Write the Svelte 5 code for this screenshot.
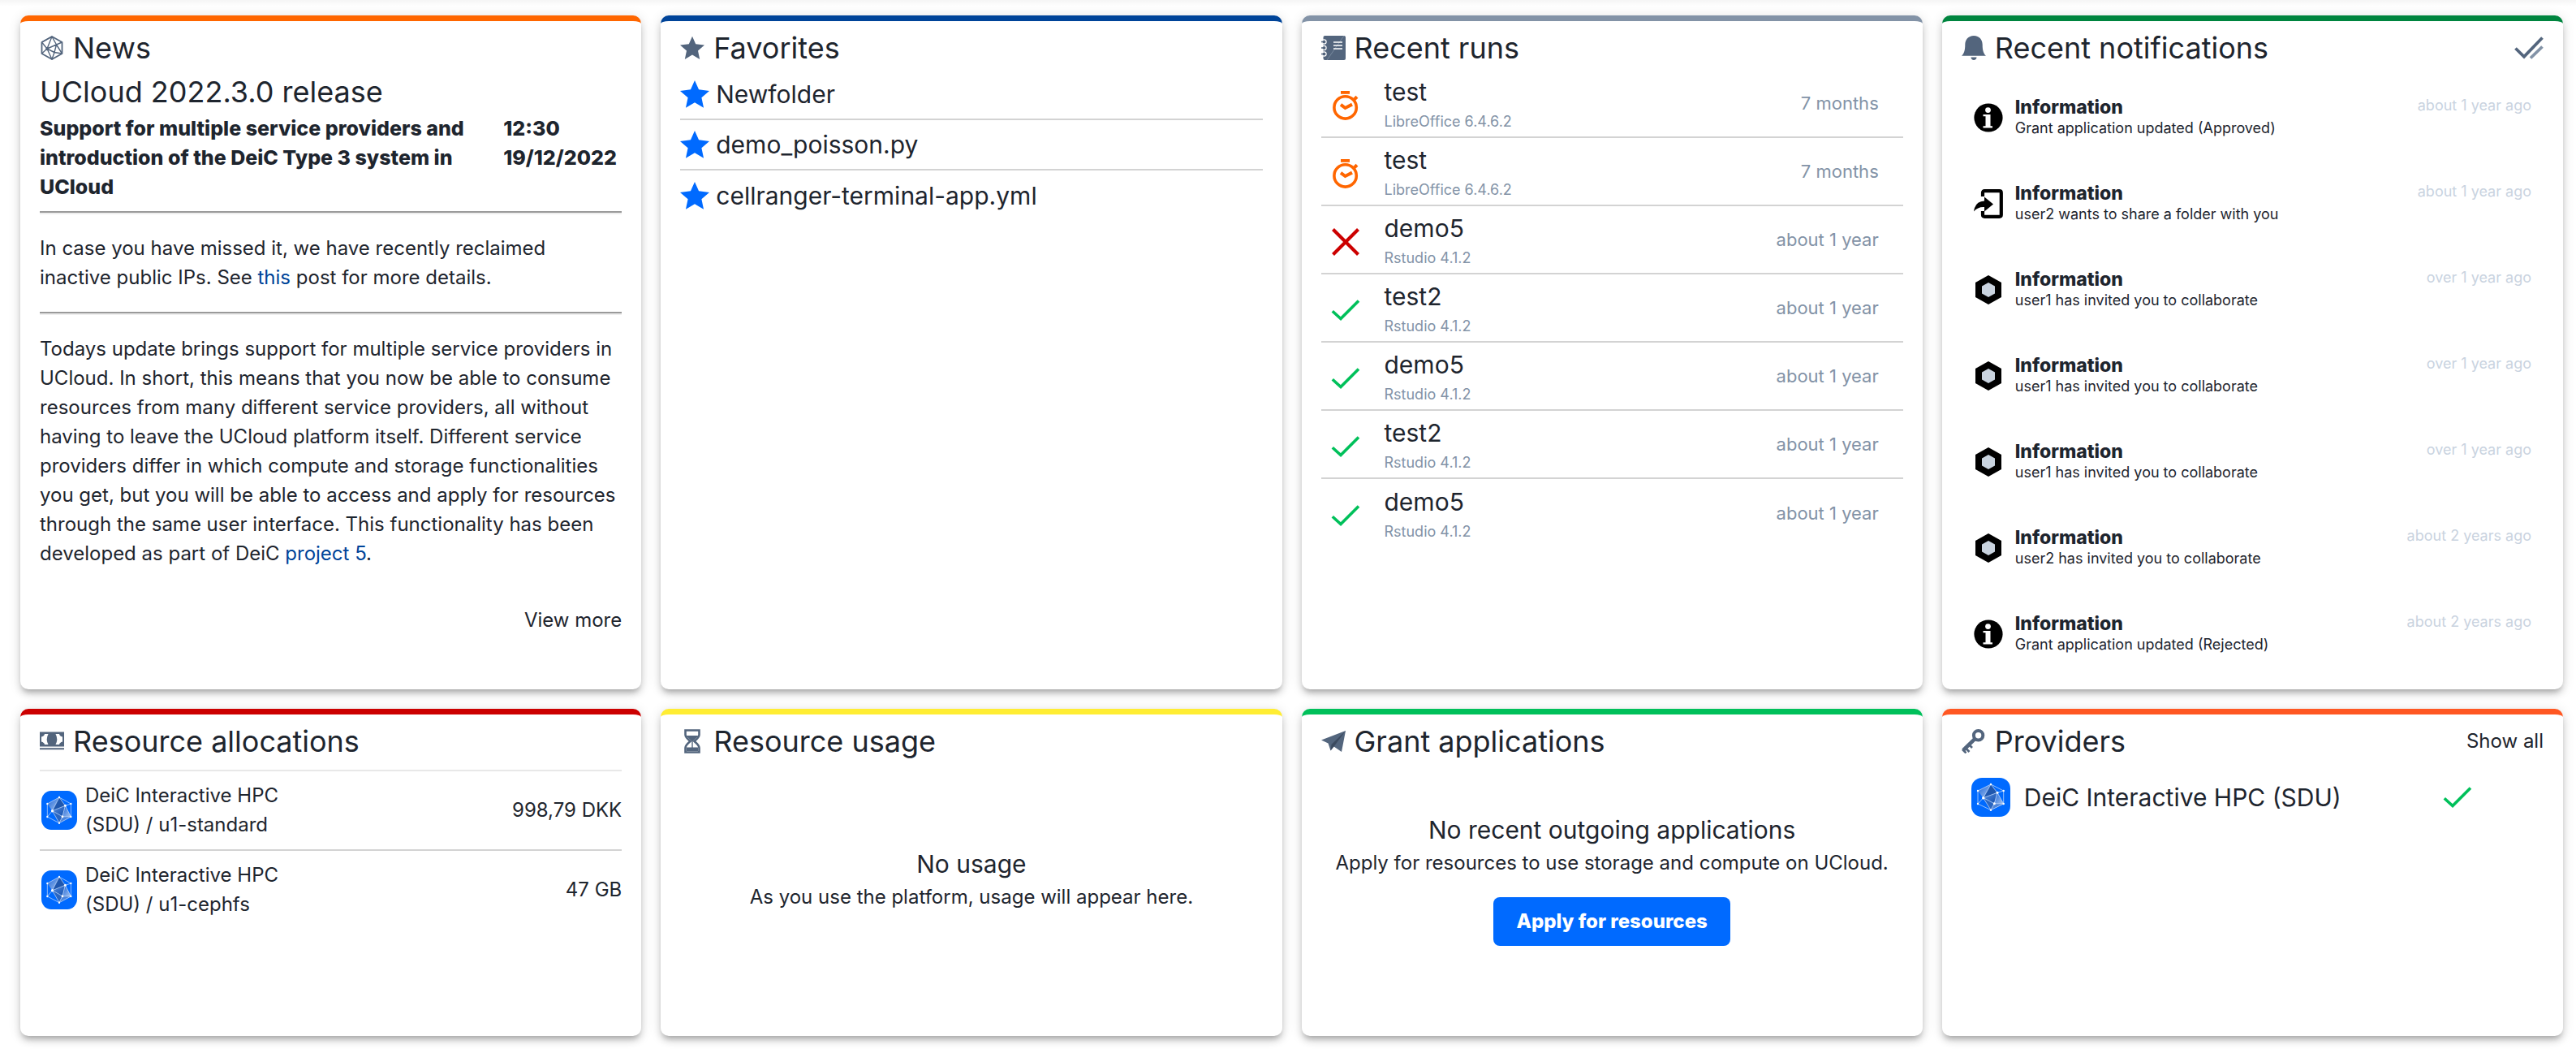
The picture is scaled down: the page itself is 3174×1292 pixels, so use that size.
<script lang="ts">
  type Run = { name: string; app: string; age: string; state: 'queued' | 'failed' | 'done' };

  const favorites = ['Newfolder', 'demo_poisson.py', 'cellranger-terminal-app.yml'];

  const runs: Run[] = [
    { name: 'test', app: 'LibreOffice 6.4.6.2', age: '7 months', state: 'queued' },
    { name: 'test', app: 'LibreOffice 6.4.6.2', age: '7 months', state: 'queued' },
    { name: 'demo5', app: 'Rstudio 4.1.2', age: 'about 1 year', state: 'failed' },
    { name: 'test2', app: 'Rstudio 4.1.2', age: 'about 1 year', state: 'done' },
    { name: 'demo5', app: 'Rstudio 4.1.2', age: 'about 1 year', state: 'done' },
    { name: 'test2', app: 'Rstudio 4.1.2', age: 'about 1 year', state: 'done' },
    { name: 'demo5', app: 'Rstudio 4.1.2', age: 'about 1 year', state: 'done' },
  ];

  const notifications = [
    { icon: 'info', body: 'Grant application updated (Approved)', age: 'about 1 year ago' },
    { icon: 'share', body: 'user2 wants to share a folder with you', age: 'about 1 year ago' },
    { icon: 'project', body: 'user1 has invited you to collaborate', age: 'over 1 year ago' },
    { icon: 'project', body: 'user1 has invited you to collaborate', age: 'over 1 year ago' },
    { icon: 'project', body: 'user1 has invited you to collaborate', age: 'over 1 year ago' },
    { icon: 'project', body: 'user2 has invited you to collaborate', age: 'about 2 years ago' },
    { icon: 'info', body: 'Grant application updated (Rejected)', age: 'about 2 years ago' },
  ];

  const allocations = [
    { provider: 'DeiC Interactive HPC (SDU) / u1-standard', balance: '998,79 DKK' },
    { provider: 'DeiC Interactive HPC (SDU) / u1-cephfs', balance: '47 GB' },
  ];
</script>

{#snippet star()}
  <path d="M15 .8 19.2 10.3 30 11.6 22 18.5 24.2 29 15 23.6 5.8 29 8 18.5 0 11.6 10.8 10.3Z" fill="currentColor" />
{/snippet}

{#snippet check()}
  <svg class="icon-md ok" viewBox="0 0 36 36" aria-hidden="true">
    <path d="M1.8 19.2 12 28.6 34 6.6" fill="none" stroke="currentColor" stroke-width="3.6" />
  </svg>
{/snippet}

{#snippet logo()}
  <svg class="logo" viewBox="0 0 48 48" preserveAspectRatio="none" aria-hidden="true">
    <defs>
      <linearGradient id="facet-light" x1="0" y1="0" x2="1" y2="1">
        <stop offset="0" stop-color="#1763d8" />
        <stop offset="1" stop-color="#a9c4ee" />
      </linearGradient>
      <linearGradient id="facet-dark" x1="0" y1="0" x2="1" y2="1">
        <stop offset="0" stop-color="#5b8fdf" />
        <stop offset="1" stop-color="#0f4cab" />
      </linearGradient>
    </defs>
    <rect width="48" height="48" rx="13" fill="#006aff" />
    <path d="M24 8 14.7 24.7 8 16Z" fill="url(#facet-light)" />
    <path d="M24 8 32 18.3 14.7 24.7Z" fill="#1f57ae" />
    <path d="M14.7 24.7 32 18.3 28.3 31.7Z" fill="url(#facet-dark)" />
    <path d="M32 18.3 39.7 32 28.3 31.7Z" fill="url(#facet-light)" />
    <path d="M14.7 24.7 28.3 31.7 24 39.7Z" fill="#2b66c0" />
    <path d="M28.3 31.7 39.7 32 24 39.7Z" fill="#4d84d8" />
    <path
      d="M24 8 39.7 16V32L24 39.7 8 32V16ZM24 8 32 18.3 39.7 32M24 8 14.7 24.7 8 32M14.7 24.7 32 18.3 28.3 31.7ZM28.3 31.7 24 39.7 14.7 24.7M28.3 31.7 39.7 32M32 18.3 39.7 16"
      fill="none" stroke="#d5e4fb" stroke-width=".7" />
    <g fill="#fff">
      <circle cx="24" cy="8" r="1.2" /><circle cx="39.7" cy="16" r="1.2" /><circle cx="39.7" cy="32" r="1.2" />
      <circle cx="24" cy="39.7" r="1.2" /><circle cx="8" cy="32" r="1.2" /><circle cx="8" cy="16" r="1.2" />
      <circle cx="32" cy="18.3" r="1.5" /><circle cx="14.7" cy="24.7" r="1.7" /><circle cx="28.3" cy="31.7" r="1.5" />
    </g>
  </svg>
{/snippet}

<main>
  <section class="card orange">
    <header>
      <svg class="icon-sm" viewBox="0 0 30 30" aria-hidden="true">
        <g fill="none" stroke="currentColor" stroke-linejoin="round">
          <path d="M15 1 27.5 8V22L15 29 2.5 22V8Z" stroke-width="1.8" />
          <path d="M15 1 20.5 11 27.5 22M15 1 9 16 2.5 22M9 16 20.5 11 18 20.5ZM2.5 8 9 16 15 29 18 20.5 27.5 22M20.5 11 27.5 8M15 1 2.5 8" stroke-width="1.4" />
        </g>
        <circle cx="9" cy="16" r="1.8" fill="currentColor" />
      </svg>
      <h2>News</h2>
    </header>
    <article>
      <h3>UCloud 2022.3.0 release</h3>
      <div class="lead">
        <span>Support for multiple service providers and introduction of the DeiC Type 3 system in UCloud</span>
        <time>12:30 19/12/2022</time>
      </div>
      <hr class="first" />
      <p>In case you have missed it, we have recently reclaimed inactive public IPs. See <a href="#this">this</a> post for more details.</p>
      <hr />
      <p>Todays update brings support for multiple service providers in UCloud. In short, this means that you now be able to consume resources from many different service providers, all without having to leave the UCloud platform itself. Different service providers differ in which compute and storage functionalities you get, but you will be able to access and apply for resources through the same user interface. This functionality has been developed as part of DeiC <a href="#project">project 5</a>.</p>
    </article>
    <a class="plain more" href="#news">View more</a>
  </section>

  <section class="card blue">
    <header>
      <svg class="icon-sm" viewBox="0 0 30 30" aria-hidden="true">{@render star()}</svg>
      <h2>Favorites</h2>
    </header>
    <ul class="favorites">
      {#each favorites as name}
        <li>
          <svg class="icon-md fav" viewBox="0 0 30 30" aria-hidden="true">{@render star()}</svg>
          <span>{name}</span>
        </li>
      {/each}
    </ul>
  </section>

  <section class="card gray">
    <header>
      <svg class="icon-sm" viewBox="0 0 30 30" aria-hidden="true">
        <rect x="2.5" width="27.5" height="30" rx="2" fill="currentColor" />
        <path d="M28 0 7 30" stroke="#8393a7" stroke-width=".8" />
        <g stroke="#fff" stroke-width="1.6"><path d="M15 8H26M15 12H26M15 16H26" /></g>
        <g fill="currentColor" stroke="#fff" stroke-width="1.2">
          <circle cx="3.5" cy="7.5" r="2.6" /><circle cx="3.5" cy="15" r="2.6" /><circle cx="3.5" cy="22.5" r="2.6" />
        </g>
        <path d="M0 7.5H4M0 15H4M0 22.5H4" stroke="currentColor" stroke-width="1.6" />
      </svg>
      <h2>Recent runs</h2>
    </header>
    <ul class="runs">
      {#each runs as run}
        <li>
          {#if run.state === 'queued'}
            <svg class="icon-md queued" viewBox="0 0 36 36" aria-hidden="true">
              <circle cx="17.6" cy="20.4" r="13.7" fill="none" stroke="currentColor" stroke-width="3.6" />
              <path d="M12 0H23V3.8H12Z" fill="currentColor" />
              <path d="M27.5 11.5 32 7.3" stroke="currentColor" stroke-width="4" />
              <path d="M12 16.8 17.5 21 26 16.6" fill="none" stroke="currentColor" stroke-width="4" />
            </svg>
          {:else if run.state === 'failed'}
            <svg class="icon-md failed" viewBox="0 0 36 36" aria-hidden="true">
              <path d="M2.5 2.5 33.5 33.5M33.5 2.5 2.5 33.5" stroke="currentColor" stroke-width="4.2" />
            </svg>
          {:else}
            {@render check()}
          {/if}
          <div class="grow">
            <div class="name">{run.name}</div>
            <div class="app">{run.app}</div>
          </div>
          <time>{run.age}</time>
        </li>
      {/each}
    </ul>
  </section>

  <section class="card green">
    <header>
      <svg class="icon-sm" viewBox="0 0 30 30" aria-hidden="true">
        <path d="M15 0C8 0 4.3 5 4.3 11C4.3 18 3 22 0 24.8H30C27 22 25.7 18 25.7 11C25.7 5 22 0 15 0ZM11.5 26.5H18.5C18.5 31 11.5 31 11.5 26.5Z" fill="currentColor" />
      </svg>
      <h2>Recent notifications</h2>
      <button class="mark-read" aria-label="Mark all as read">
        <svg class="icon-md" viewBox="0 0 36 36" aria-hidden="true">
          <path d="M20 30.5 34.5 16.5" stroke="#8393a7" stroke-width="3.8" />
          <path d="M1.5 18.5 12 28.8 34.500 5.500" fill="none" stroke="#53657d" stroke-width="3.8" />
        </svg>
      </button>
    </header>
    <ul class="notifications">
      {#each notifications as item}
        <li>
          <svg class="icon-md" viewBox="0 0 36 36" aria-hidden="true">
            {#if item.icon === 'info'}
              <circle cx="18" cy="18" r="17.6" />
              <circle cx="17.5" cy="8.6" r="3.4" fill="#fff" />
              <path d="M11.5 14H20.5V28.3H23V30.6H11.5V28.3H14.5V16.3H11.5Z" fill="#fff" />
            {:else if item.icon === 'share'}
              <path d="M11 9V4.5Q11 2.2 13.3 2.2H31.5Q33.8 2.2 33.8 4.5V31.5Q33.8 33.8 31.5 33.8H13.3Q11 33.8 11 31.5V27" fill="none" stroke="#000" stroke-width="4.2" />
              <path d="M0 27.5Q1.5 15 13 14.5V9.5L24 18.5 13 27.5V22Q5 21.5 0 27.5Z" />
            {:else}
              <path d="M18 0 34 9V27L18 36 2 27V9Z" />
              <path d="M18 9 26 13.5V22.5L18 27 10 22.5V13.5Z" fill="#c9d3df" />
            {/if}
          </svg>
          <div class="grow">
            <div class="kind">Information</div>
            <div class="body">{item.body}</div>
          </div>
          <time>{item.age}</time>
        </li>
      {/each}
    </ul>
  </section>

  <section class="card red">
    <header>
      <svg class="icon-sm" viewBox="0 0 30 30" aria-hidden="true">
        <path d="M0 3.5H30V21.5H0ZM0 23.3H30V25.3H0Z" fill="currentColor" />
        <path d="M6 6H10.5Q7 12.5 10.5 19H6Q5.5 16.5 2 15.5V9.5Q5.5 8.5 6 6ZM24 6H19.5Q23 12.5 19.5 19H24Q24.5 16.5 28 15.5V9.5Q24.5 8.5 24 6Z" fill="#fff" />
      </svg>
      <h2>Resource allocations</h2>
    </header>
    <table class="allocations">
      <tbody>
        {#each allocations as row}
          <tr>
            <td class="mark">{@render logo()}</td>
            <td><div class="provider">{row.provider}</div></td>
            <td class="balance">{row.balance}</td>
          </tr>
        {/each}
      </tbody>
    </table>
  </section>

  <section class="card yellow">
    <header>
      <svg class="icon-sm" viewBox="0 0 30 30" aria-hidden="true">
        <path d="M6.5 1.5H23.5V7Q23.5 10 17.5 15Q23.5 20 23.5 23V28.5H6.5V23Q6.5 20 12.5 15Q6.5 10 6.5 7Z" fill="none" stroke="currentColor" stroke-width="2.6" />
        <path d="M7 8H23L15 15.5ZM14.3 15H15.7V22.5H22V27H8V22.5H14.3Z" fill="currentColor" />
      </svg>
      <h2>Resource usage</h2>
    </header>
    <div class="empty">
      <h3>No usage</h3>
      <p>As you use the platform, usage will appear here.</p>
    </div>
  </section>

  <section class="card lime">
    <header>
      <svg class="icon-sm" viewBox="0 0 30 30" aria-hidden="true">
        <path d="M30 2 0 13.5 8.5 17.5 11.5 26.5 15.5 21.5 25 28Z" fill="currentColor" />
        <path d="M30 2 12.5 19 11.5 26.5 15.5 21.5Z" fill="#3b4a5f" />
      </svg>
      <h2>Grant applications</h2>
    </header>
    <div class="empty">
      <h3>No recent outgoing applications</h3>
      <p>Apply for resources to use storage and compute on UCloud.</p>
      <button class="primary">Apply for resources</button>
    </div>
  </section>

  <section class="card coral">
    <header>
      <svg class="icon-sm" viewBox="0 0 30 30" aria-hidden="true">
        <circle cx="20.6" cy="7.8" r="5.7" fill="none" stroke="currentColor" stroke-width="4" />
        <path d="M16.5 11.8 2 26" stroke="currentColor" stroke-width="4.6" />
        <path d="M4.5 23 9.5 28M9 19 13 23M1 25 5.5 29.5" stroke="currentColor" stroke-width="2.6" />
      </svg>
      <h2>Providers</h2>
      <a class="plain" href="#providers">Show all</a>
    </header>
    <ul class="providers">
      <li>
        {@render logo()}
        <span class="grow">DeiC Interactive HPC (SDU)</span>
        {@render check()}
      </li>
    </ul>
  </section>
</main>

<style>
  :global(body) {
    margin: 0;
    background: #fff;
  }

  main {
    box-sizing: border-box;
    min-height: 100vh;
    display: grid;
    grid-template-columns: repeat(4, minmax(0, 1fr));
    grid-template-rows: minmax(830px, auto) minmax(403px, auto);
    gap: 24px;
    align-content: start;
    padding: 19px 16px 16px 25px;
    background: linear-gradient(rgba(0, 0, 0, 0.04), transparent 8px) #fff;
    color: #1e252e;
    font-family: Inter, 'Noto Sans', sans-serif;
    font-size: 24px;
    line-height: 36px;
  }

  .card {
    box-sizing: border-box;
    display: flex;
    flex-direction: column;
    padding: 6px 24px 0;
    border-top: 7px solid var(--accent);
    border-radius: 10px;
    background: #fff;
    box-shadow:
      0 6px 6px -4px rgba(0, 0, 0, 0.2),
      0 6px 8px 0 rgba(0, 0, 0, 0.14),
      0 2px 16px 0 rgba(0, 0, 0, 0.12);
  }

  .orange { --accent: #ff6600; }
  .blue { --accent: #004499; }
  .gray { --accent: #8393a7; }
  .green { --accent: #00853f; }
  .red { --accent: #cc0000; }
  .yellow { --accent: #ffed33; }
  .lime { --accent: #00c05a; }
  .coral { --accent: #ff5722; }

  header {
    display: flex;
    align-items: center;
    gap: 11px;
  }

  h2,
  h3 {
    margin: 0;
    font-size: 36px;
    line-height: 54px;
    font-weight: 400;
  }

  h2 {
    flex: 1;
  }

  p,
  ul {
    margin: 0;
    padding: 0;
    list-style: none;
  }

  li {
    display: flex;
    align-items: center;
  }

  a {
    color: #004499;
    text-decoration: none;
  }

  a.plain {
    color: inherit;
  }

  .more {
    align-self: flex-end;
    margin-top: 46px;
  }

  .grow {
    flex: 1;
  }

  .icon-sm {
    flex: none;
    width: 30px;
    height: 30px;
    color: #53657d;
  }

  .icon-md {
    flex: none;
    width: 36px;
    height: 36px;
  }

  .logo {
    flex: none;
    display: block;
    width: 48px;
    height: 48px;
  }

  .ok { color: #00c05a; }
  .fav { color: #006aff; }
  .queued { color: #ff6600; }
  .failed { color: #cc0000; }

  .lead {
    display: flex;
    font-size: 25px;
    font-weight: 800;
  }

  .lead span {
    flex: 1;
  }

  .lead time {
    width: 146px;
  }

  hr {
    box-sizing: border-box;
    height: 4px;
    margin: 24px 0;
    border: 0;
    border-top: 2px solid #9a9a9a;
    background: #eeeeee;
  }

  hr.first {
    margin-top: 12px;
  }

  .favorites li {
    box-sizing: border-box;
    height: 62px;
    gap: 8px;
    font-size: 30px;
  }

  .favorites li:not(:last-child),
  .runs li:not(:last-child) {
    border-bottom: 2px solid #d3d3d3;
  }

  .runs li {
    box-sizing: border-box;
    height: 84px;
    padding: 0 30px 0 12px;
    gap: 30px;
  }

  .runs .icon-md {
    margin-top: 6px;
  }

  .name {
    font-size: 30px;
    line-height: 45px;
  }

  .app {
    font-size: 18px;
    line-height: 27px;
    color: #8393a7;
  }

  .runs time {
    font-size: 22px;
    color: #8393a7;
  }

  .notifications {
    padding-top: 6px;
  }

  .notifications li {
    height: 106px;
    padding: 0 15px;
    gap: 15px;
  }

  .kind {
    font-size: 23px;
    line-height: 26px;
    font-weight: 800;
  }

  .body {
    font-size: 18px;
    line-height: 26px;
  }

  .notifications time {
    align-self: flex-start;
    padding-top: 27px;
    font-size: 18px;
    line-height: 22px;
    color: #c9d3df;
  }

  .mark-read {
    display: flex;
    padding: 0;
    border: 0;
    background: none;
  }

  .allocations {
    margin-top: 8px;
    border-collapse: collapse;
    border-top: 2px solid #e8e8e8;
  }

  .allocations tr:not(:last-child) {
    border-bottom: 2px solid #d3d3d3;
  }

  .allocations td {
    padding: 12px 0;
  }

  .allocations .mark {
    width: 56px;
  }

  .allocations .logo {
    width: 44px;
    margin-left: 2px;
  }

  .provider {
    max-width: 280px;
  }

  .allocations .balance {
    text-align: right;
  }

  .empty {
    flex: 1;
    display: flex;
    flex-direction: column;
    align-items: center;
    justify-content: center;
    padding-bottom: 52px;
    text-align: center;
  }

  .empty h3 {
    font-size: 30px;
    line-height: 45px;
  }

  .primary {
    height: 60px;
    margin-top: 24px;
    padding: 0 28px;
    border: 0;
    border-radius: 8px;
    background: #006aff;
    color: #fff;
    font: 800 24px/36px Inter, 'Noto Sans', sans-serif;
  }

  .providers li {
    padding: 18px 88px 18px 12px;
    gap: 17px;
    font-size: 30px;
  }
</style>
